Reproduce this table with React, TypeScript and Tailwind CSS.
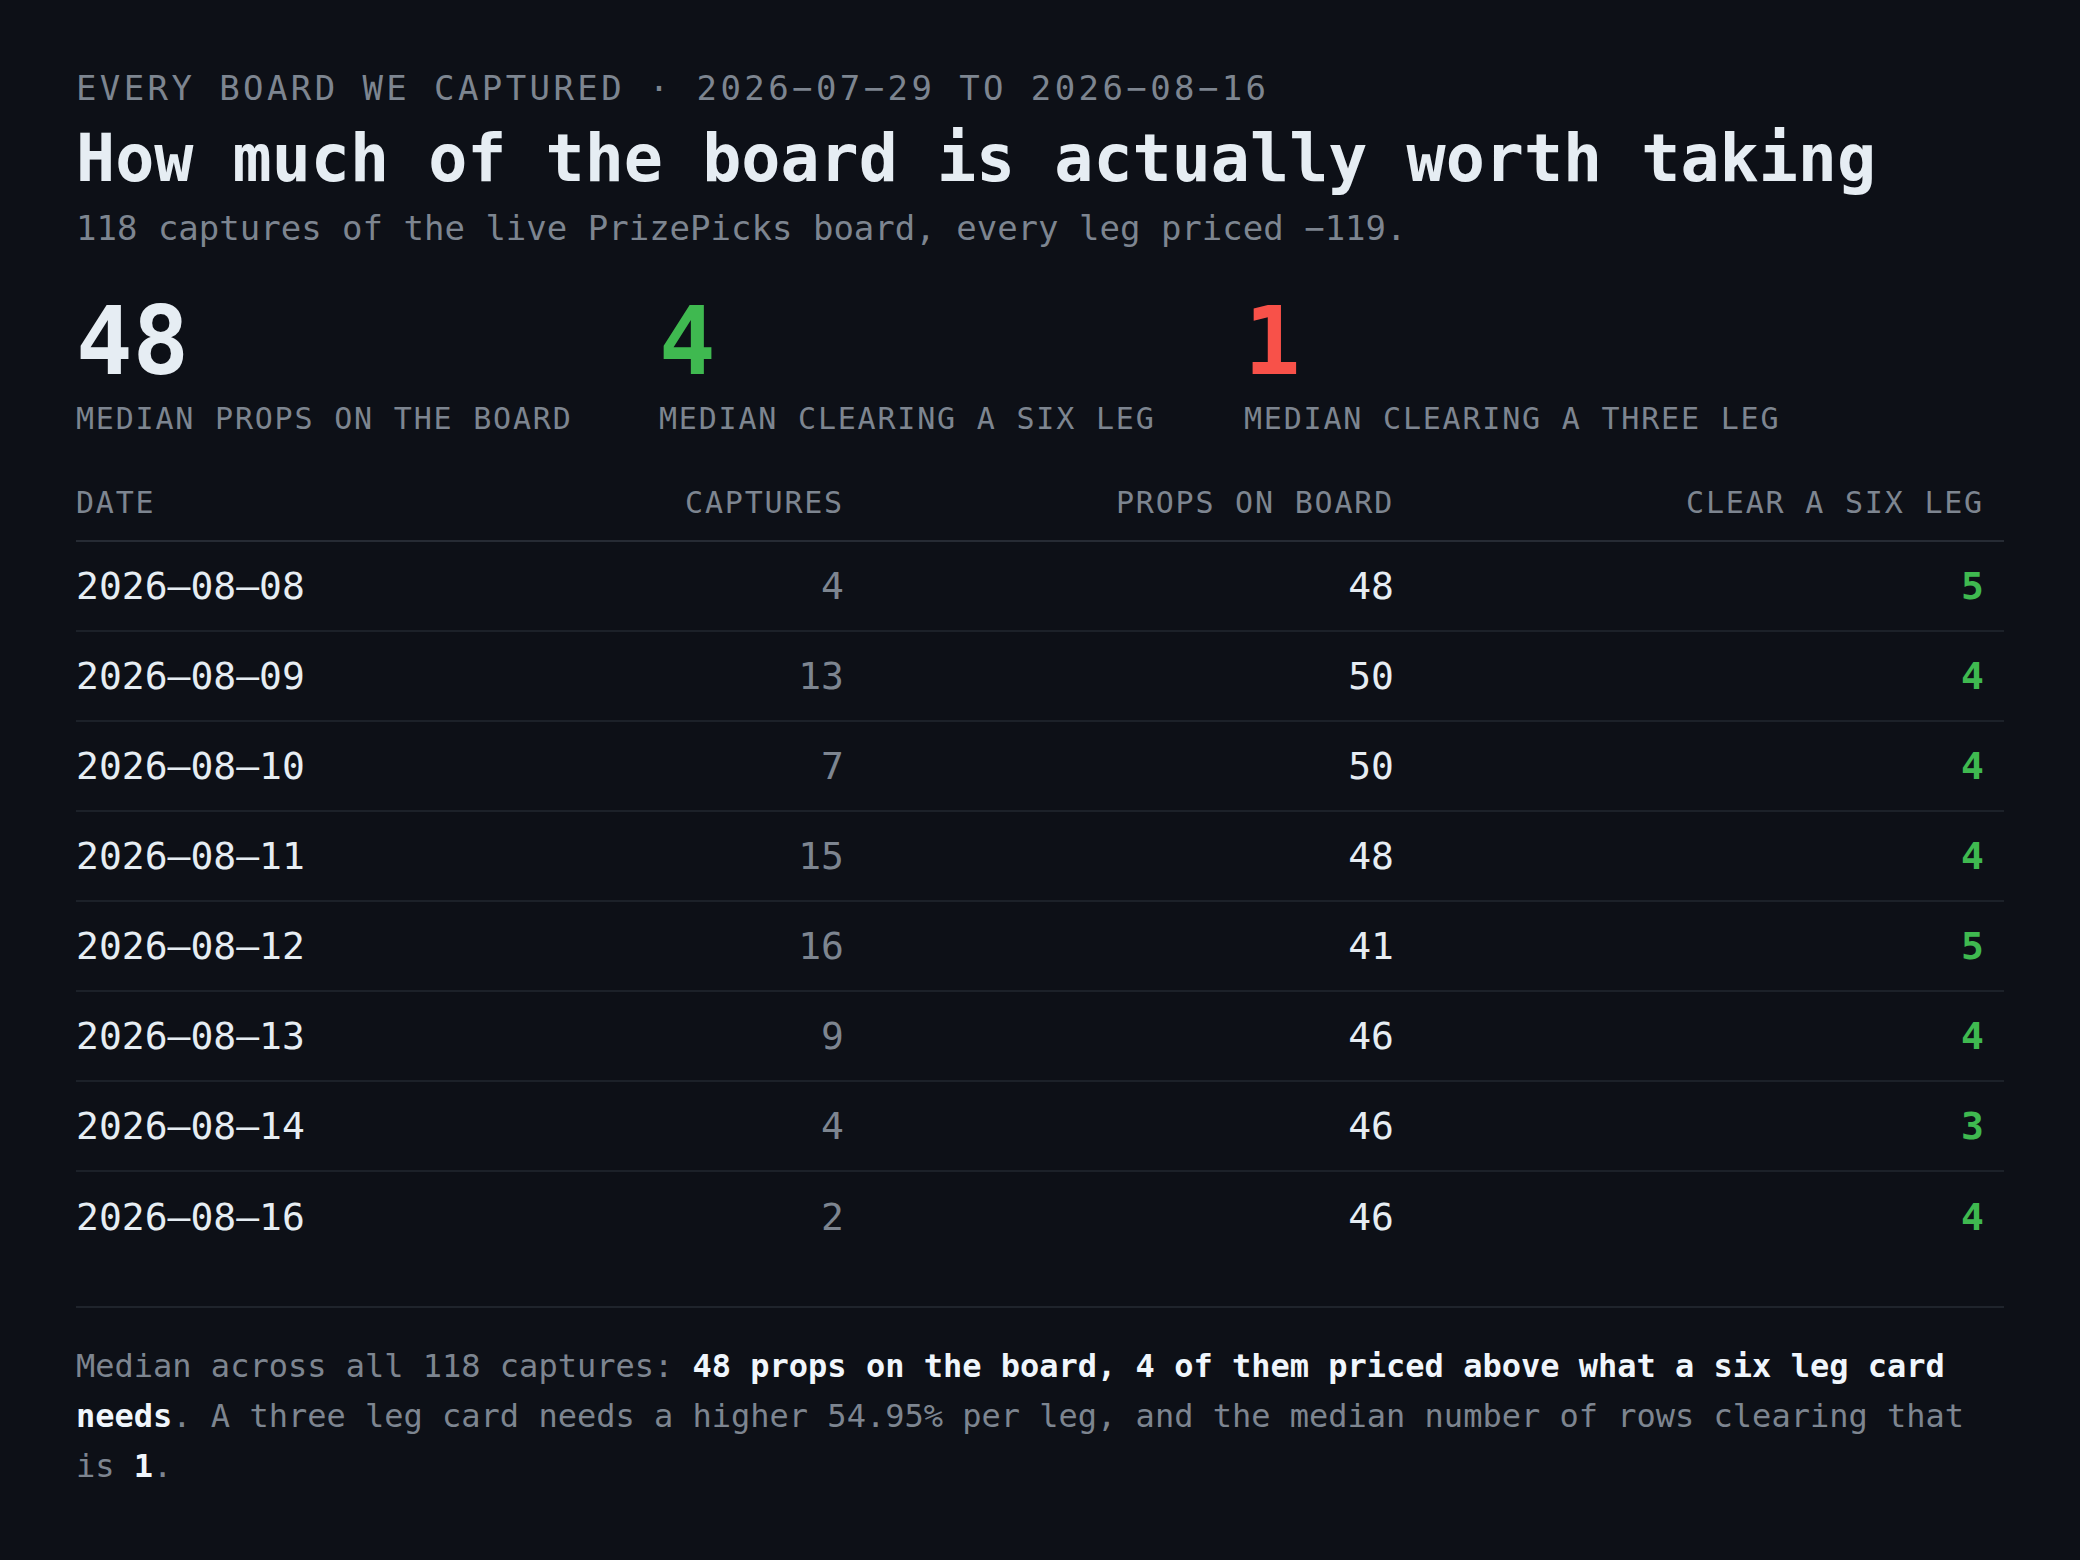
const rows = [
  { date: '2026–08–08', captures: 4, props: 48, clear: 5 },
  { date: '2026–08–09', captures: 13, props: 50, clear: 4 },
  { date: '2026–08–10', captures: 7, props: 50, clear: 4 },
  { date: '2026–08–11', captures: 15, props: 48, clear: 4 },
  { date: '2026–08–12', captures: 16, props: 41, clear: 5 },
  { date: '2026–08–13', captures: 9, props: 46, clear: 4 },
  { date: '2026–08–14', captures: 4, props: 46, clear: 3 },
  { date: '2026–08–16', captures: 2, props: 46, clear: 4 },
];

const stats = [
  { value: '48', label: 'Median props on the board', color: 'text-[#e6edf3]' },
  { value: '4', label: 'Median clearing a six leg', color: 'text-[#3fb950]' },
  { value: '1', label: 'Median clearing a three leg', color: 'text-[#f85149]' },
];

const cols = 'grid grid-cols-[500px_288px_550px_590px]';

export default function App() {
  return (
    <div
      className="min-h-screen bg-[#0d1017] px-[76px] pt-[68px] pb-16 text-[#e6edf3]"
      style={{ fontFamily: '"DejaVu Sans Mono", "Liberation Mono", monospace' }}
    >
      {/* heading */}
      <p className="text-[34px] leading-[40px] tracking-[0.1em] uppercase text-[#7d8590]">
        Every board we captured · 2026−07−29 to 2026−08−16
      </p>
      <h1 className="mt-[13px] text-[65px] leading-[76px] font-bold text-[#e6edf3]">
        How much of the board is actually worth taking
      </h1>
      <p className="mt-[11px] text-[34px] leading-[40px] text-[#7d8590]">
        118 captures of the live PrizePicks board, every leg priced −119.
      </p>

      {/* headline numbers */}
      <div className="mt-[47px] grid grid-cols-[583px_585px_1fr]">
        {stats.map(s => (
          <div key={s.label}>
            <div className={`text-[94px] leading-[94px] font-bold ${s.color}`}>{s.value}</div>
            <div className="mt-[12px] text-[30px] leading-[36px] tracking-[0.06em] uppercase text-[#7d8590]">
              {s.label}
            </div>
          </div>
        ))}
      </div>

      {/* per day table */}
      <div className="mt-[48px]">
        <div className={`${cols} border-b-2 border-[#262b34] pb-[19px] text-[30px] leading-[36px] tracking-[0.06em] uppercase text-[#7d8590]`}>
          <div>Date</div>
          <div className="text-right pr-[20px]">Captures</div>
          <div className="text-right pr-[20px]">Props on board</div>
          <div className="text-right pr-[20px]">Clear a six leg</div>
        </div>
        {rows.map((r, i) => (
          <div
            key={r.date}
            className={`${cols} h-[90px] items-center text-[38px] leading-[48px] ${
              i < rows.length - 1 ? 'border-b-2 border-[#1c2129]' : ''
            }`}
          >
            <div className="text-[#e6edf3]">{r.date}</div>
            <div className="text-right pr-[20px] text-[#7d8590]">{r.captures}</div>
            <div className="text-right pr-[20px] text-[#e6edf3]">{r.props}</div>
            <div className="text-right pr-[20px] font-bold text-[#3fb950]">{r.clear}</div>
          </div>
        ))}
      </div>

      {/* summary */}
      <p className="mt-[44px] border-t-2 border-[#1f242c] pt-[33px] text-[32px] leading-[50px] text-[#7d8590]">
        Median across all 118 captures:{' '}
        <b className="font-bold text-[#f0f6fc]">48 props on the board, 4 of them priced above what a six leg card needs</b>
        . A three leg card needs a higher 54.95% per leg, and the median number of rows clearing that is{' '}
        <b className="font-bold text-[#f0f6fc]">1</b>.
      </p>
    </div>
  );
}
